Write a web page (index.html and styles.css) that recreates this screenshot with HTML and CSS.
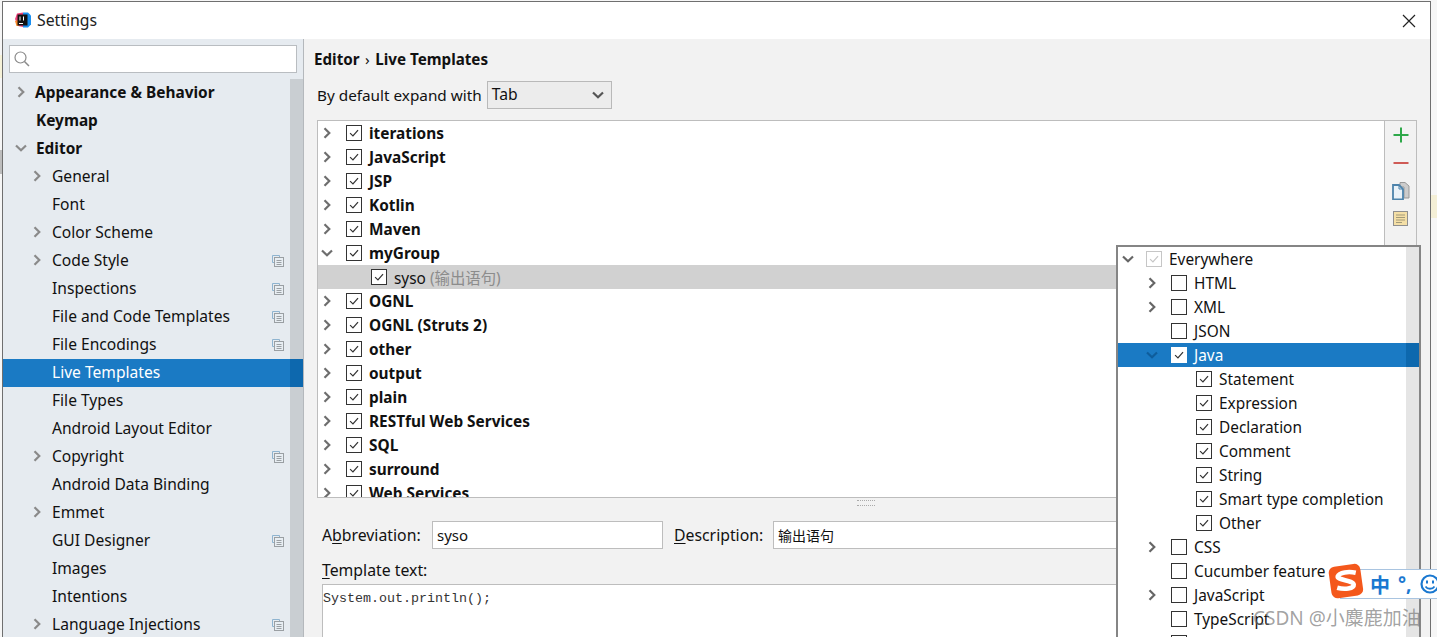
FILE: index.html
```html
<!DOCTYPE html>
<html lang="en">
<head>
<meta charset="utf-8">
<title>Settings</title>
<link rel="stylesheet" href="styles.css">
</head>
<body>
<svg class="defs" width="0" height="0" aria-hidden="true">
  <symbol id="cr" viewBox="0 0 12 12"><path d="M3.500 1.200 8.300 6 3.500 10.800" fill="none" stroke="currentColor" stroke-width="2.200"/></symbol>
  <symbol id="cd" viewBox="0 0 12 12"><path d="M1 3.500 6 8.300 11 3.500" fill="none" stroke="currentColor" stroke-width="2.200"/></symbol>
  <symbol id="ck" viewBox="0 0 16 16"><path d="M3.500 8.200 6.800 11.400 12.600 4.600" fill="none" stroke="currentColor" stroke-width="1.400"/></symbol>
  <symbol id="dup" viewBox="0 0 12 12"><path d="M.5.5h7v2M.5.5v7h2" fill="none" stroke="#8fb4d0"/><rect x="2.500" y="2.500" width="9" height="9" fill="#e8eef3" stroke="#9a9fa3"/><path d="M4.500 5.500h5M4.500 7.500h5M4.500 9.500h5" stroke="#9a9fa3"/></symbol>
</svg>
<div class="window">
  <header class="titlebar">
    <svg class="appicon" viewBox="0 0 16 16"><path d="M0 7 2 1.500l6-1V15l-5-1z" fill="#f0407a"/><path d="M8 .5h5l3 3v9L13 15.500H8z" fill="#1a8ff0"/><path d="M0 9l3-1 1 6-2.500 0z" fill="#f98a2b"/><rect x="2.500" y="2.500" width="10" height="11" fill="#111"/><rect x="4" y="11" width="4" height="1" fill="#fff"/><path d="M5 4.500v4M8.500 4.500v4" stroke="#fff"/></svg>
    <span class="title">Settings</span>
    <svg class="close" viewBox="0 0 14 14"><path d="M1 1l12 12M13 1 1 13" stroke="#222" stroke-width="1.200" fill="none"/></svg>
  </header>
  <div class="body">
    <aside class="sidebar">
      <div class="search">
        <svg class="searchicon" viewBox="0 0 16 16"><circle cx="6.500" cy="6.500" r="5.500" fill="none" stroke="#8a8a8a" stroke-width="1.200"/><path d="M10.500 10.500 15 15" stroke="#8a8a8a" stroke-width="1.500"/></svg>
      </div>
      <div class="navwrap">
        <nav class="nav">
          <div class="nav-row top"><svg class="tw"><use href="#cr"/></svg><b class="first">Appearance &amp; Behavior</b></div>
          <div class="nav-row top"><span class="tw"></span><b>Keymap</b></div>
          <div class="nav-row top"><svg class="tw"><use href="#cd"/></svg><b>Editor</b></div>
          <div class="nav-row sub"><svg class="tw"><use href="#cr"/></svg><span>General</span></div>
          <div class="nav-row sub"><span class="tw"></span><span>Font</span></div>
          <div class="nav-row sub"><svg class="tw"><use href="#cr"/></svg><span>Color Scheme</span></div>
          <div class="nav-row sub"><svg class="tw"><use href="#cr"/></svg><span>Code Style</span><svg class="dup"><use href="#dup"/></svg></div>
          <div class="nav-row sub"><span class="tw"></span><span>Inspections</span><svg class="dup"><use href="#dup"/></svg></div>
          <div class="nav-row sub"><span class="tw"></span><span>File and Code Templates</span><svg class="dup"><use href="#dup"/></svg></div>
          <div class="nav-row sub"><span class="tw"></span><span>File Encodings</span><svg class="dup"><use href="#dup"/></svg></div>
          <div class="nav-row sub active"><span class="tw"></span><span>Live Templates</span></div>
          <div class="nav-row sub"><span class="tw"></span><span>File Types</span></div>
          <div class="nav-row sub"><span class="tw"></span><span>Android Layout Editor</span></div>
          <div class="nav-row sub"><svg class="tw"><use href="#cr"/></svg><span>Copyright</span><svg class="dup"><use href="#dup"/></svg></div>
          <div class="nav-row sub"><span class="tw"></span><span>Android Data Binding</span></div>
          <div class="nav-row sub"><svg class="tw"><use href="#cr"/></svg><span>Emmet</span></div>
          <div class="nav-row sub"><span class="tw"></span><span>GUI Designer</span><svg class="dup"><use href="#dup"/></svg></div>
          <div class="nav-row sub"><span class="tw"></span><span>Images</span></div>
          <div class="nav-row sub"><span class="tw"></span><span>Intentions</span></div>
          <div class="nav-row sub"><svg class="tw"><use href="#cr"/></svg><span>Language Injections</span><svg class="dup"><use href="#dup"/></svg></div>
        </nav>
        <div class="navscroll"></div>
      </div>
    </aside>
    <main class="main">
      <div class="crumb"><b>Editor</b><span class="sep">›</span><b>Live Templates</b></div>
      <div class="expand">
        <span class="expand-label">By default expand with</span>
        <div class="select"><span>Tab</span><svg class="selarrow"><use href="#cd"/></svg></div>
      </div>
      <section class="treebox">
        <div class="tree">
          <div class="row"><svg class="tw"><use href="#cr"/></svg><span class="cb"><svg><use href="#ck"/></svg></span><b>iterations</b></div>
          <div class="row"><svg class="tw"><use href="#cr"/></svg><span class="cb"><svg><use href="#ck"/></svg></span><b>JavaScript</b></div>
          <div class="row"><svg class="tw"><use href="#cr"/></svg><span class="cb"><svg><use href="#ck"/></svg></span><b>JSP</b></div>
          <div class="row"><svg class="tw"><use href="#cr"/></svg><span class="cb"><svg><use href="#ck"/></svg></span><b>Kotlin</b></div>
          <div class="row"><svg class="tw"><use href="#cr"/></svg><span class="cb"><svg><use href="#ck"/></svg></span><b>Maven</b></div>
          <div class="row"><svg class="tw"><use href="#cd"/></svg><span class="cb"><svg><use href="#ck"/></svg></span><b>myGroup</b></div>
          <div class="row child selected"><span class="cb"><svg><use href="#ck"/></svg></span><span>syso <span class="muted">(输出语句)</span></span></div>
          <div class="row"><svg class="tw"><use href="#cr"/></svg><span class="cb"><svg><use href="#ck"/></svg></span><b>OGNL</b></div>
          <div class="row"><svg class="tw"><use href="#cr"/></svg><span class="cb"><svg><use href="#ck"/></svg></span><b>OGNL (Struts 2)</b></div>
          <div class="row"><svg class="tw"><use href="#cr"/></svg><span class="cb"><svg><use href="#ck"/></svg></span><b>other</b></div>
          <div class="row"><svg class="tw"><use href="#cr"/></svg><span class="cb"><svg><use href="#ck"/></svg></span><b>output</b></div>
          <div class="row"><svg class="tw"><use href="#cr"/></svg><span class="cb"><svg><use href="#ck"/></svg></span><b>plain</b></div>
          <div class="row"><svg class="tw"><use href="#cr"/></svg><span class="cb"><svg><use href="#ck"/></svg></span><b>RESTful Web Services</b></div>
          <div class="row"><svg class="tw"><use href="#cr"/></svg><span class="cb"><svg><use href="#ck"/></svg></span><b>SQL</b></div>
          <div class="row"><svg class="tw"><use href="#cr"/></svg><span class="cb"><svg><use href="#ck"/></svg></span><b>surround</b></div>
          <div class="row"><svg class="tw"><use href="#cr"/></svg><span class="cb"><svg><use href="#ck"/></svg></span><b>Web Services</b></div>
        </div>
        <div class="tools">
          <svg class="tool" viewBox="0 0 18 18"><path d="M9 1.500v15M1.500 9h15" stroke="#2ea84a" stroke-width="2"/></svg>
          <svg class="tool" viewBox="0 0 18 18"><path d="M1.500 9h15" stroke="#cf5b56" stroke-width="2"/></svg>
          <svg class="tool" viewBox="0 0 18 18"><path d="M8 .5h5l4 3.500v12h-5V5H8z" fill="#ccc" stroke="#999"/><path d="M1 3h6l4 4v10.500H1z" fill="#eaf2f8" stroke="#4d83ab" stroke-width="1.800"/><path d="M7 3v4h4" fill="none" stroke="#4d83ab"/></svg>
          <svg class="tool" viewBox="0 0 18 18"><rect x="1.500" y="1.500" width="14" height="14" fill="#f4dfa6" stroke="#8f8f8f"/><path d="M4 5h9M4 7.500h9M4 10h9M4 12.500h6" stroke="#a39a78"/></svg>
        </div>
      </section>
      <div class="grip"></div>
      <div class="fields">
        <label class="lbl">A<u>b</u>breviation:</label>
        <div class="input abbr">syso</div>
        <label class="lbl desc"><u>D</u>escription:</label>
        <div class="input descr">输出语句</div>
      </div>
      <div class="tpl-label"><u>T</u>emplate text:</div>
      <div class="editor">System.out.println();</div>
    </main>
  </div>
</div>

<div class="popup">
  <div class="ptree">
    <div class="prow"><svg class="tw"><use href="#cd"/></svg><span class="cb dis"><svg><use href="#ck"/></svg></span><span>Everywhere</span></div>
    <div class="prow d1"><svg class="tw"><use href="#cr"/></svg><span class="cb"></span><span>HTML</span></div>
    <div class="prow d1"><svg class="tw"><use href="#cr"/></svg><span class="cb"></span><span>XML</span></div>
    <div class="prow d1"><span class="tw"></span><span class="cb"></span><span>JSON</span></div>
    <div class="prow d1 hot"><svg class="tw"><use href="#cd"/></svg><span class="cb"><svg><use href="#ck"/></svg></span><span>Java</span></div>
    <div class="prow d2"><span class="cb"><svg><use href="#ck"/></svg></span><span>Statement</span></div>
    <div class="prow d2"><span class="cb"><svg><use href="#ck"/></svg></span><span>Expression</span></div>
    <div class="prow d2"><span class="cb"><svg><use href="#ck"/></svg></span><span>Declaration</span></div>
    <div class="prow d2"><span class="cb"><svg><use href="#ck"/></svg></span><span>Comment</span></div>
    <div class="prow d2"><span class="cb"><svg><use href="#ck"/></svg></span><span>String</span></div>
    <div class="prow d2"><span class="cb"><svg><use href="#ck"/></svg></span><span>Smart type completion</span></div>
    <div class="prow d2"><span class="cb"><svg><use href="#ck"/></svg></span><span>Other</span></div>
    <div class="prow d1"><svg class="tw"><use href="#cr"/></svg><span class="cb"></span><span>CSS</span></div>
    <div class="prow d1"><span class="tw"></span><span class="cb"></span><span>Cucumber feature</span></div>
    <div class="prow d1"><svg class="tw"><use href="#cr"/></svg><span class="cb"></span><span>JavaScript</span></div>
    <div class="prow d1"><span class="tw"></span><span class="cb"></span><span>TypeScript</span></div>
    <div class="prow d1"><span class="tw"></span><span class="cb"></span></div>
  </div>
  <div class="pscroll"></div>
</div>

<div class="ime">
  <svg class="ime-logo" viewBox="0 0 36 36"><rect x="2" y="2" width="31" height="31" rx="6" transform="rotate(-8 18 18)" fill="#f4581c"/><path d="M27 9.500C20 8 11 9 9.500 13c-1 4 15 3.500 15.500 8 .3 4-9 5-16 3" fill="none" stroke="#fff" stroke-width="4.500"/></svg>
  <span class="ime-zh">中</span>
  <span class="ime-dot">°,</span>
  <svg class="ime-smile" viewBox="0 0 20 20"><circle cx="10" cy="10" r="8.500" fill="none" stroke="#1a78d0" stroke-width="2.200"/><path d="M7 6.500v3M13 6.500v3" stroke="#1a78d0" stroke-width="2"/><path d="M5.500 12.500c2 3 7 3 9 0" fill="none" stroke="#1a78d0" stroke-width="1.800"/></svg>
</div>
<div class="watermark">CSDN @小麋鹿加油</div>
</body>
</html>
```

FILE: styles.css
```css
* { box-sizing: border-box; }
html, body { margin: 0; height: 637px; overflow: hidden; }
body {
  position: relative;
  background:
    linear-gradient(#f6f2d8, #f6f2d8) 0 55px / 2px 23px no-repeat,
    linear-gradient(#bdbdbd, #bdbdbd) 0 150px / 2px 24px no-repeat,
    linear-gradient(#f4efd6, #f4efd6) 100% 195px / 6px 23px no-repeat,
    #f6f6f6;
  padding: 1px 6px 0 2px;
  font-family: "Noto Sans", "Noto Sans CJK SC", sans-serif;
  font-size: 15.400px;
  color: #111;
}
.defs { position: absolute; }
b { font-weight: 700; }
u { text-decoration: underline; text-underline-offset: 2px; }

.window {
  height: 700px;
  border: 1px solid #6f6f6f;
  border-bottom: 0;
  background: #f2f2f2;
  display: flex;
  flex-direction: column;
}
.titlebar {
  height: 37px;
  flex: none;
  background: #fff;
  display: flex;
  align-items: center;
  padding: 0 14px 2px 12px;
}
.appicon { width: 16px; height: 16px; margin-right: 6px; }
.title { font-size: 15.800px; flex: 1; color: #222; }
.close { width: 14px; height: 14px; margin-top: 2px; }

.body { flex: 1; display: flex; min-height: 0; }

.sidebar {
  width: 301px;
  flex: none;
  background: #e6ebf0;
  border-right: 1px solid #b4b8bc;
  display: flex;
  flex-direction: column;
}
.search {
  height: 28px;
  margin: 6px;
  background: #fff;
  border: 1px solid #b9bdc1;
  display: flex;
  align-items: center;
  padding-left: 4px;
}
.searchicon { width: 16px; height: 16px; }
.navwrap { flex: 1; display: flex; position: relative; }
.nav { flex: 1; }
.navscroll { width: 13px; background: #c9ced2; flex: none; }
.nav-row {
  height: 28px;
  display: flex;
  align-items: center;
  position: relative;
  margin-right: -13px;
  padding-bottom: 2px;
  z-index: 1;
}
.tw { width: 12px; height: 12px; flex: none; color: #8a8a8a; }
.nav-row.top { padding-left: 12px; font-size: 15.400px; }
.nav-row.top .tw { margin-right: 9px; }
.nav-row.top .first { margin-left: -1px; }
.nav-row.sub { padding-left: 28px; font-size: 15.600px; }
.nav-row.sub .tw { margin-right: 9px; }
.nav-row .dup { width: 12px; height: 12px; position: absolute; right: 19px; top: 8px; }
.nav-row.active { background: #1a7ac4; color: #fff; }
.nav-row.active::after { content: ""; position: absolute; right: 0; top: 0; bottom: 0; width: 13px; background: #0d68ae; }

.main { flex: 1; min-width: 0; padding: 0 13px; display: flex; flex-direction: column; }
.crumb { height: 41px; margin-left: -3px; padding-bottom: 2px; display: flex; align-items: center; font-size: 15.200px; }
.sep { margin: 0 5.500px; }
.expand { height: 30px; display: flex; align-items: center; font-size: 15.300px; }
.expand-label { margin-right: 5px; padding-bottom: 1px; }
.select {
  width: 125px;
  height: 28px;
  border: 1px solid #b9b9b9;
  background: #ececec;
  display: flex;
  align-items: center;
  justify-content: space-between;
  padding: 0 7px 2px 4px;
  font-size: 15.700px;
}
.selarrow { width: 12px; height: 12px; color: #555; margin-top: 2px; }

.treebox {
  height: 378px;
  margin-top: 10px;
  border: 1px solid #bdbdbd;
  display: flex;
  flex: none;
  background: #fff;
}
.tree { flex: 1; overflow: hidden; }
.row {
  height: 24px;
  display: flex;
  align-items: center;
  padding-left: 3px;
}
.row .tw { margin-right: 13px; color: #6e6e6e; }
.row .cb { margin-right: 7px; }
.row.child { padding-left: 53px; background: #d1d1d1; }
.muted { color: #8c8c8c; }
.cb {
  width: 16px;
  height: 16px;
  flex: none;
  border: 1px solid #333;
  background: #fff;
  color: #333;
  display: block;
}
.cb svg { width: 14px; height: 14px; display: block; }
.cb.dis { border-color: #c6c6c6; color: #c6c6c6; }
.tools {
  width: 32px;
  flex: none;
  background: #f2f2f2;
  border-left: 1px solid #bdbdbd;
  display: flex;
  flex-direction: column;
  align-items: center;
  padding-top: 5px;
  gap: 10px;
}
.tool { width: 18px; height: 18px; display: block; }

.grip { height: 23px; position: relative; flex: none; }
.grip::after { content: ""; position: absolute; left: 540px; top: 2px; width: 18px; height: 4px; border-top: 1px dotted #aaa; border-bottom: 1px dotted #aaa; }

.fields { display: flex; align-items: center; height: 28px; margin-left: 5px; flex: none; font-size: 15.800px; }
.lbl { width: 110px; white-space: nowrap; }
.lbl.desc { width: 99px; margin-left: 11px; }
.input {
  height: 28px;
  background: #fff;
  border: 1px solid #bdbdbd;
  display: flex;
  align-items: center;
  padding-left: 4px;
  font-size: 15px;
}
.abbr { width: 231px; }
.descr { flex: 1; font-family: "Noto Sans CJK SC", sans-serif; font-size: 14px; }
.tpl-label { margin: 11px 0 0 5px; height: 24px; line-height: 20px; flex: none; font-size: 15.800px; }
.editor {
  margin: 0 0 0 5px;
  flex: 1;
  background: #fff;
  border: 1px solid #bdbdbd;
  padding: 6px 0 0 0;
  font-family: "Liberation Mono", monospace;
  font-size: 13.330px;
  color: #333;
}

.popup {
  position: absolute;
  left: 1116px;
  top: 245px;
  width: 305px;
  height: 400px;
  border: 2px solid #858585;
  background: #fff;
  display: flex;
}
.ptree { flex: 1; }
.pscroll { width: 13px; background: #e5e5e5; flex: none; }
.prow { height: 24px; display: flex; align-items: center; margin-right: -13px; position: relative; padding-left: 4px; }
.prow .tw { margin-right: 12px; color: #666; }
.prow .cb { margin-right: 7px; }
.prow.d1 { padding-left: 28px; }
.prow.d1 .tw { margin-right: 13px; }
.prow.d2 { padding-left: 78px; }
.prow.hot { background: #1a7ac4; color: #fff; }
.prow.hot .tw { color: #0e5d9c; }
.prow.hot .cb { border-color: #fff; }
.prow.hot::after { content: ""; position: absolute; right: 0; top: 0; bottom: 0; width: 13px; background: #0d68ae; }

.ime {
  position: absolute;
  left: 1340px;
  top: 569px;
  width: 97px;
  height: 30px;
  background: #fff;
  border: 1px solid #a9c4e0;
  border-right: 0;
  display: flex;
  align-items: center;
  color: #1a78d0;
  overflow: visible;
}
.ime-logo { position: absolute; left: -13px; top: -7px; width: 37px; height: 37px; }
.ime-zh { margin-left: 29px; font: 700 20px "Noto Sans CJK SC", sans-serif; }
.ime-dot { margin-left: 8px; font-weight: 700; font-size: 19px; }
.ime-smile { width: 20px; height: 20px; margin-left: 9px; flex: none; }

.watermark {
  position: absolute;
  left: 1253px;
  top: 605px;
  font: 19px/26px "Noto Sans", "Noto Sans CJK SC", sans-serif;
  color: rgba(110, 110, 110, 0.65);
  white-space: nowrap;
}
```
